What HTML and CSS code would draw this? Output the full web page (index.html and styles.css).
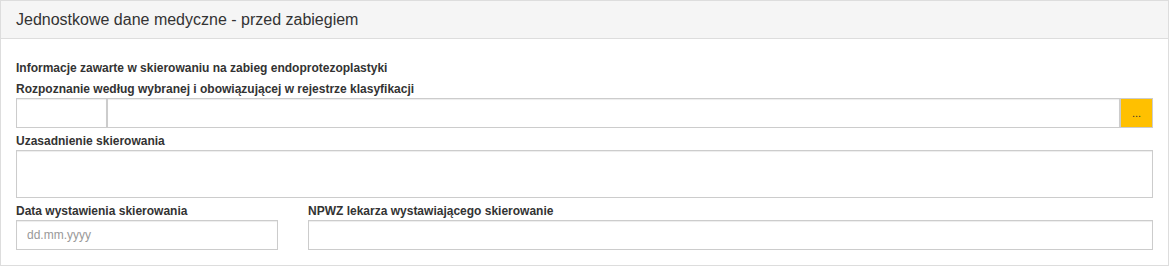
FILE: index.html
```html
<!DOCTYPE html>
<html lang="pl">
<head>
    <meta charset="UTF-8">
    <meta name="viewport" content="width=device-width, initial-scale=1.0">
    <title>Jednostkowe dane medyczne</title>
    <link rel="stylesheet" href="styles.css">
</head>
<body>
    <div class="panel">
        <div class="panel-heading">Jednostkowe dane medyczne - przed zabiegiem</div>
        <div class="panel-body">
            <div class="group">
                <label class="lbl">Informacje zawarte w skierowaniu na zabieg endoprotezoplastyki</label>
            </div>
            <div class="group">
                <label class="lbl">Rozpoznanie według wybranej i obowiązującej w rejestrze klasyfikacji</label>
                <div class="input-group">
                    <input class="ctrl code" type="text">
                    <input class="ctrl name" type="text">
                    <button class="pick" type="button">...</button>
                </div>
            </div>
            <div class="group">
                <label class="lbl">Uzasadnienie skierowania</label>
                <textarea class="ctrl area"></textarea>
            </div>
            <div class="row">
                <div class="col-3">
                    <label class="lbl">Data wystawienia skierowania</label>
                    <input class="ctrl" type="text" placeholder="dd.mm.yyyy">
                </div>
                <div class="col-9">
                    <label class="lbl">NPWZ lekarza wystawiającego skierowanie</label>
                    <input class="ctrl" type="text">
                </div>
            </div>
        </div>
    </div>
</body>
</html>
```

FILE: styles.css
```css
*{margin:0;padding:0;box-sizing:border-box;}
body{
    font-family:"Liberation Sans",Arial,sans-serif;
    color:#333;
    background:#fff;
}
.panel{
    width:1169px;
    height:266px;
    border:1px solid #ddd;
}
.panel-heading{
    height:38px;
    padding:0 15px;
    line-height:37px;
    font-size:16px;
    background:#f5f5f5;
    border-bottom:1px solid #ddd;
}
.panel-body{padding:21px 15px 15px;}
.group{margin-bottom:5px;}
.lbl{
    display:block;
    font-size:12px;
    font-weight:bold;
    line-height:16px;
    color:#333;
    margin-bottom:1px;
}
.ctrl{
    display:block;
    width:100%;
    height:30px;
    padding:0 10px;
    font-family:"Liberation Sans",Arial,sans-serif;
    font-size:12px;
    color:#555;
    border:1px solid #ccc;
    background:#fff;
    box-shadow:inset 0 1px 1px rgba(0,0,0,.075);
    outline:none;
}
.ctrl::placeholder{color:#999;}
.input-group{display:flex;height:30px;}
.input-group .ctrl{height:30px;}
.code{flex:0 0 91px;}
.name{flex:1;}
.pick{
    flex:0 0 33px;
    height:30px;
    background:#ffc000;
    border:1px solid #ccc;
    font-family:"Liberation Sans",Arial,sans-serif;
    font-size:11px;
    line-height:28px;
    color:#333;
}
.area{height:48px;resize:none;}
.row{display:flex;gap:30px;}
.col-3{flex:0 0 262px;}
.col-9{flex:1;}
```
